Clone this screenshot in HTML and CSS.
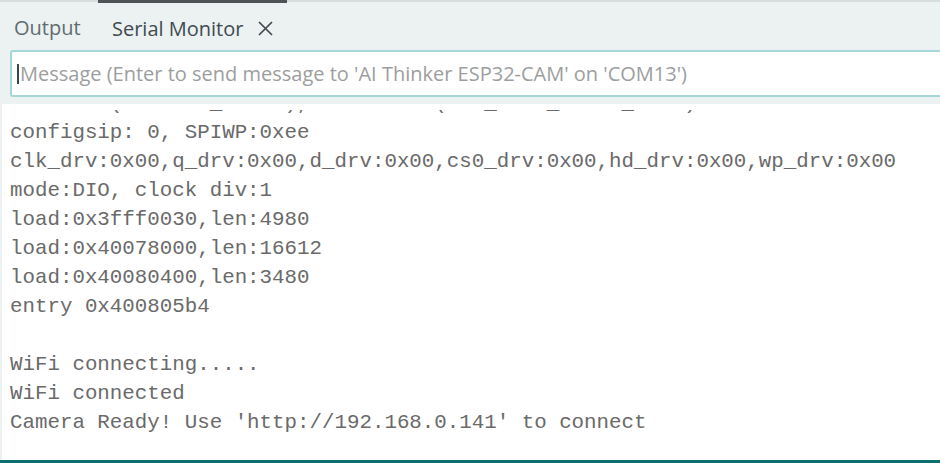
FILE: index.html
```html
<!DOCTYPE html>
<html lang="en">
<head>
    <meta charset="UTF-8">
    <meta name="viewport" content="width=device-width, initial-scale=1.0">
    <title>Serial Monitor</title>
    <link rel="stylesheet" href="styles.css">
</head>
<body>
    <div class="panel">
        <div class="tabs">
            <div class="tab">Output</div>
            <div class="tab active">
                Serial Monitor
                <svg class="close" width="15" height="15" viewBox="0 0 15 15">
                    <path d="M1 1 L14 14 M14 1 L1 14" stroke="#3f4b50" stroke-width="1.7" fill="none"/>
                </svg>
            </div>
        </div>

        <div class="input-row">
            <div class="message-box">
                <span class="caret"></span>
                <span class="placeholder">Message (Enter to send message to 'AI Thinker ESP32-CAM' on 'COM13')</span>
            </div>
        </div>

        <div class="output">
            <div class="log">
                <div class="line">rst:0x1 (POWERON_RESET),boot:0x13 (SPI_FAST_FLASH_BOOT)</div>
                <div class="line">configsip: 0, SPIWP:0xee</div>
                <div class="line">clk_drv:0x00,q_drv:0x00,d_drv:0x00,cs0_drv:0x00,hd_drv:0x00,wp_drv:0x00</div>
                <div class="line">mode:DIO, clock div:1</div>
                <div class="line">load:0x3fff0030,len:4980</div>
                <div class="line">load:0x40078000,len:16612</div>
                <div class="line">load:0x40080400,len:3480</div>
                <div class="line">entry 0x400805b4</div>
                <div class="line">&nbsp;</div>
                <div class="line">WiFi connecting.....</div>
                <div class="line">WiFi connected</div>
                <div class="line">Camera Ready! Use 'http://192.168.0.141' to connect</div>
            </div>
        </div>

        <div class="status-bar"></div>
    </div>
</body>
</html>
```

FILE: styles.css
```css
body {
    margin: 0;
    background: #ecf1f1;
    font-family: "Open Sans", "Noto Sans", sans-serif;
    overflow: hidden;
}
.panel {
    display: flex;
    flex-direction: column;
    height: 100vh;
}
.tabs {
    display: flex;
    flex-shrink: 0;
    height: 48px;
    border-top: 2px solid #d7dcdc;
}
.tab {
    display: flex;
    align-items: center;
    padding: 3px 0 0 14px;
    width: 84px;
    font-size: 20px;
    color: #606b70;
}
.tab.active {
    width: 175px;
    margin-top: -2px;
    border-top: 3px solid #4e5456;
    color: #3f4b50;
    gap: 15px;
}
.tab .close {
    margin-top: 1px;
}
.input-row {
    flex-shrink: 0;
    padding-left: 10px;
}
.message-box {
    display: flex;
    align-items: center;
    height: 47px;
    box-sizing: border-box;
    background: #fff;
    border: 2px solid #a5d7d8;
    border-right: none;
    border-radius: 3px 0 0 3px;
    padding-left: 5px;
}
.caret {
    width: 2px;
    height: 20px;
    background: #37474f;
    margin-right: 1px;
}
.placeholder {
    font-size: 20px;
    color: #9c9e9e;
    white-space: nowrap;
}
.output {
    flex: 1;
    min-height: 0;
    display: flex;
    margin: 7px 0 0 2px;
    padding-top: 6px;
    background: #fff;
}
.log {
    flex: 1;
    min-height: 0;
    overflow: hidden;
    display: flex;
    flex-direction: column;
    justify-content: flex-end;
    padding: 0 0 23px 8px;
    font-family: "Liberation Mono", "Courier New", monospace;
    font-size: 20.8px;
    line-height: 29px;
    color: #6a6a6a;
}
.line {
    white-space: pre;
}
.status-bar {
    flex-shrink: 0;
    height: 3px;
    background: #0b6f70;
}
```
